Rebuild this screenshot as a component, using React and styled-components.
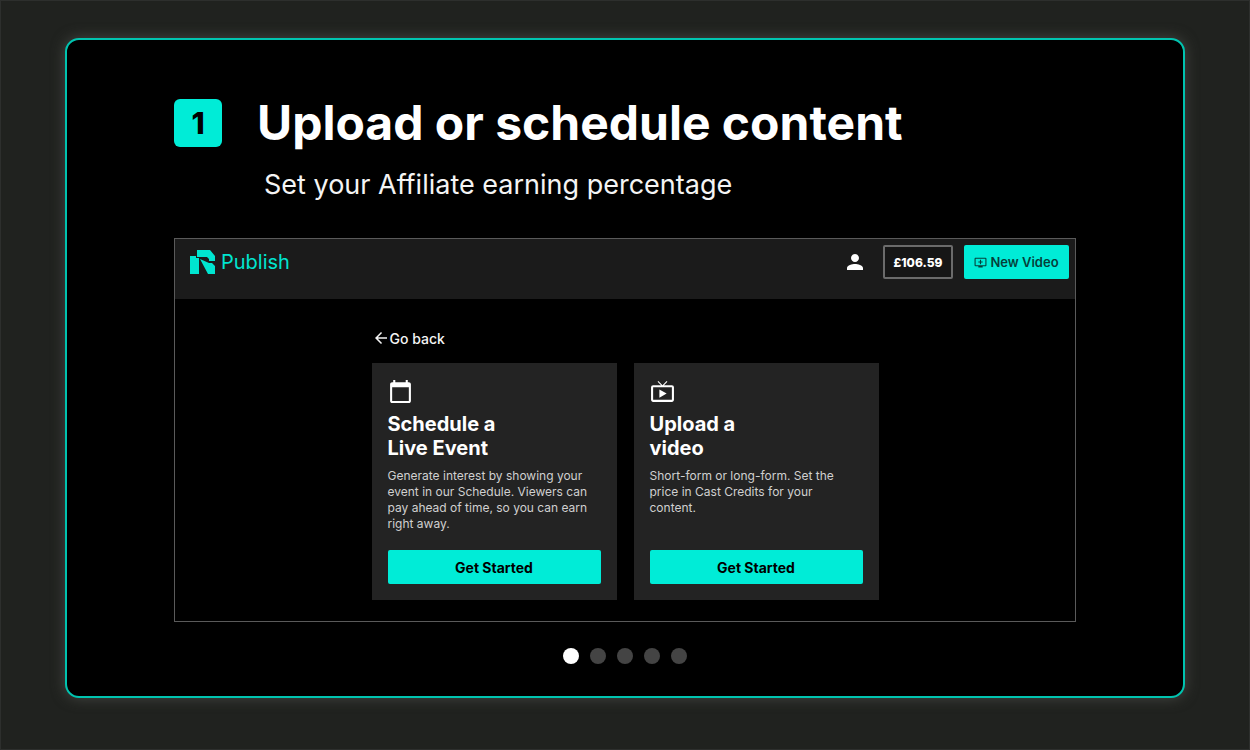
import React, { useState } from "react";
import styled, { createGlobalStyle } from "styled-components";
import {
  MdArrowBack,
  MdCalendarToday,
  MdLiveTv,
  MdOutlineAddToQueue,
  MdPerson,
} from "react-icons/md";

const GlobalStyle = createGlobalStyle`
  * {
    box-sizing: border-box;
  }

  body {
    margin: 0;
    background-color: #20221f;
    color: #fff;
    font-family: Inter, "Liberation Sans", sans-serif;
  }

  button {
    font-family: inherit;
    cursor: pointer;
  }
`;

const Page = styled.main`
  display: flex;
  min-height: 100vh;
  padding: 37px 64px 51px;
  border: 1px solid #2d2f2d;
`;
const Slide = styled.section`
  flex: 1;
  display: flex;
  flex-direction: column;
  padding: 57px 107px 32px;
  border: 2px solid #00c4b0;
  border-radius: 14px;
  background-color: #000;
  box-shadow: 0 0 14px #454743;
`;

// Slide heading
const Heading = styled.header`
  display: grid;
  grid-template-columns: 48px 1fr;
  column-gap: 35px;
  align-items: center;
  margin-bottom: 37px;
`;
const StepNumber = styled.span`
  display: flex;
  align-items: center;
  justify-content: center;
  height: 48px;
  border-radius: 6px;
  background-color: #00ecd7;
  color: #000;
  font-size: 30px;
  font-weight: 800;
`;
const Title = styled.h1`
  margin: 0;
  font-size: 48px;
  line-height: 52px;
  font-weight: 700;
`;
const Subtitle = styled.p`
  grid-column: 2;
  margin: 20px 0 0 7px;
  font-size: 27px;
  line-height: 32px;
  color: #f4f4f4;
`;

// The app window
const Window = styled.div`
  flex: 1;
  border: 1px solid #5a5a5a;
`;
const TopBar = styled.div`
  display: flex;
  align-items: flex-start;
  height: 60px;
  padding: 6px 6px 0 15px;
  background-color: #1b1b1b;
`;
const Brand = styled.a`
  display: flex;
  align-items: center;
  gap: 5px;
  height: 34px;
  margin-right: auto;
  color: #00e5d0;
  font-size: 20px;
  text-decoration: none;
`;
const IconButton = styled.button`
  display: flex;
  align-items: center;
  height: 34px;
  margin-right: 16px;
  padding: 0;
  border: 0;
  background: none;
  color: #fff;
  font-size: 24px;
`;
const Balance = styled.button`
  width: 70px;
  height: 34px;
  margin-right: 11px;
  padding: 0;
  border: 2px solid #6b6b6b;
  border-radius: 2px;
  background-color: #161616;
  color: #fff;
  font-size: 12px;
  font-weight: 800;
`;
const PrimaryButton = styled.button`
  display: flex;
  align-items: center;
  justify-content: center;
  gap: 3px;
  width: ${(props) => props.$width || "100%"};
  height: 34px;
  padding: 0;
  border: 0;
  border-radius: 2px;
  background-color: #00ecd7;
  color: ${(props) => (props.$soft ? "#063f3a" : "#000")};
  font-size: ${(props) => (props.$soft ? "13px" : "14px")};
  font-weight: ${(props) => (props.$soft ? 600 : 700)};
`;

const Content = styled.div`
  max-width: 507px;
  margin: 0 auto;
  padding: 29px 0 20px;
`;
const BackLink = styled.a`
  display: inline-flex;
  align-items: center;
  height: 20px;
  color: #f4f4f4;
  font-size: 14px;
  font-weight: 500;
  text-decoration: none;

  svg {
    font-size: 18px;
    stroke: currentColor;
  }
`;
const Cards = styled.div`
  display: grid;
  grid-template-columns: 1fr 1fr;
  gap: 17px;
  margin-top: 12px;
`;
const Card = styled.article`
  display: flex;
  flex-direction: column;
  min-height: 237px;
  padding: 16px;
  background-color: #232323;

  > svg {
    font-size: 25px;
  }

  ${PrimaryButton} {
    margin-top: auto;
  }
`;
const CardTitle = styled.h2`
  margin: 8px 0;
  font-size: 20px;
  line-height: 24px;
  font-weight: 700;
  white-space: pre-line;
`;
const CardText = styled.p`
  margin: 0;
  padding-right: 8px;
  color: #d0d0d0;
  font-size: 12px;
  line-height: 16px;
`;

const Dots = styled.nav`
  display: flex;
  justify-content: center;
  gap: 11px;
  margin-top: 26px;
`;
const Dot = styled.button`
  width: 16px;
  height: 16px;
  padding: 0;
  border: 0;
  border-radius: 50%;
  background-color: ${(props) => (props.$active ? "#fff" : "#444")};
`;

const Logo = () => (
  <svg width="26" height="26" viewBox="0 0 26 26" fill="currentColor" aria-hidden="true">
    <path d="M0 7h6v2h3v16H0z" />
    <path d="M7 1h13l5 6v5h-6V10l-2-2H7z" />
    <path d="M10 10l9 4h3l3 3v8h-7z" />
  </svg>
);

const cards = [
  {
    icon: MdCalendarToday,
    title: "Schedule a\nLive Event",
    text: "Generate interest by showing your event in our Schedule. Viewers can pay ahead of time, so you can earn right away.",
  },
  {
    icon: MdLiveTv,
    title: "Upload a\nvideo",
    text: "Short-form or long-form. Set the price in Cast Credits for your content.",
  },
];

const App = () => {
  const [active, setActive] = useState(0);

  return (
    <Page>
      <GlobalStyle />
      <Slide>
        <Heading>
          <StepNumber>1</StepNumber>
          <Title>Upload or schedule content</Title>
          <Subtitle>Set your Affiliate earning percentage</Subtitle>
        </Heading>

        <Window>
          <TopBar>
            <Brand href="#">
              <Logo />
              Publish
            </Brand>
            <IconButton type="button" aria-label="Account">
              <MdPerson />
            </IconButton>
            <Balance type="button">£106.59</Balance>
            <PrimaryButton type="button" $width="105px" $soft>
              <MdOutlineAddToQueue />
              New Video
            </PrimaryButton>
          </TopBar>

          <Content>
            <BackLink href="#">
              <MdArrowBack />
              Go back
            </BackLink>
            <Cards>
              {cards.map(({ icon: Icon, title, text }) => (
                <Card key={title}>
                  <Icon />
                  <CardTitle>{title}</CardTitle>
                  <CardText>{text}</CardText>
                  <PrimaryButton type="button">Get Started</PrimaryButton>
                </Card>
              ))}
            </Cards>
          </Content>
        </Window>

        <Dots aria-label="Steps">
          {[0, 1, 2, 3, 4].map((step) => (
            <Dot
              key={step}
              type="button"
              aria-label={`Step ${step + 1}`}
              $active={step === active}
              onClick={() => setActive(step)}
            />
          ))}
        </Dots>
      </Slide>
    </Page>
  );
};

export default App;
